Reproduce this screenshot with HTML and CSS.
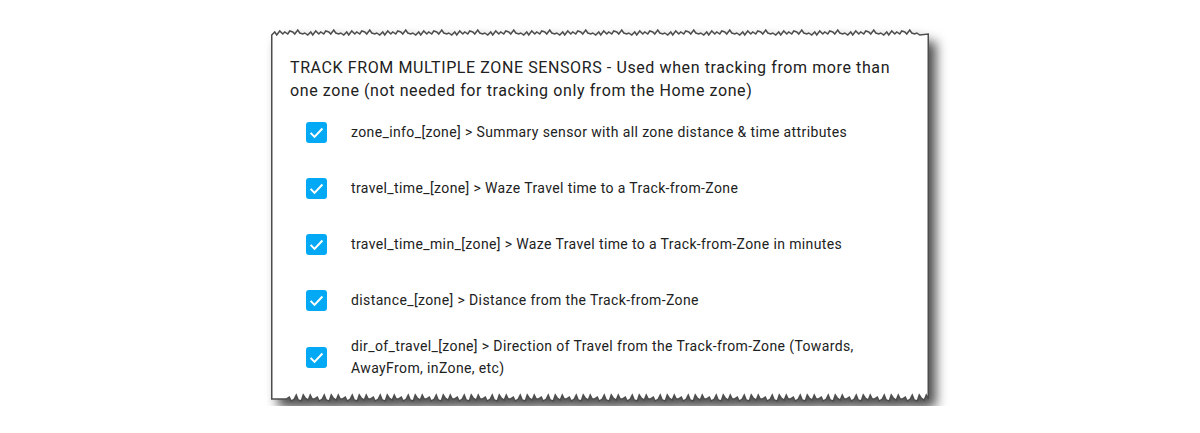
FILE: index.html
```html
<!DOCTYPE html>
<html lang="en">
<head>
<meta charset="utf-8">
<title>Track from zone sensors</title>
<link rel="stylesheet" href="styles.css">
</head>
<body>
<div class="card">
  <svg class="paper" width="658" height="378" viewBox="0 0 658 378" aria-hidden="true">
    <path d="M0.75,7 l3-3 2 3 3-4 3 3 2-2 3 2 2-3 3 1 2 2 3-4 2 3 3 1 2-1 3 2 l3-3 2 3 3-4 3 3 2-2 3 2 2-3 3 1 2 2 3-4 2 3 3 1 2-1 3 2 l3-3 2 3 3-4 3 3 2-2 3 2 2-3 3 1 2 2 3-4 2 3 3 1 2-1 3 2 l3-3 2 3 3-4 3 3 2-2 3 2 2-3 3 1 2 2 3-4 2 3 3 1 2-1 3 2 l3-3 2 3 3-4 3 3 2-2 3 2 2-3 3 1 2 2 3-4 2 3 3 1 2-1 3 2 l3-3 2 3 3-4 3 3 2-2 3 2 2-3 3 1 2 2 3-4 2 3 3 1 2-1 3 2 l3-3 2 3 3-4 3 3 2-2 3 2 2-3 3 1 2 2 3-4 2 3 3 1 2-1 3 2 l3-3 2 3 3-4 3 3 2-2 3 2 2-3 3 1 2 2 3-4 2 3 3 1 2-1 3 2 l3-3 2 3 3-4 3 3 2-2 3 2 2-3 3 1 2 2 3-4 2 3 3 1 2-1 3 2 l3-3 2 3 3-4 3 3 2-2 3 2 2-3 3 1 2 2 3-4 2 3 3 1 2-1 3 2 l3-3 2 3 3-4 3 3 2-2 3 2 2-3 3 1 2 2 3-4 2 3 3 1 2-1 3 2 l3-3 2 3 3-4 3 3 2-2 3 2 2-3 3 1 2 2 3-4 2 3 3 1 2-1 3 2 l3-3 2 3 3-4 3 3 2-2 3 2 2-3 3 1 2 2 3-4 2 3 3 1 2-1 3 2 l3-3 2 3 3-4 3 3 2-2 3 2 2-3 3 1 2 2 3-4 2 3 3 1 2-1 3 2 l3-3 2 3 3-4 3 3 2-2 3 2 2-3 3 1 2 2 3-4 2 3 3 1 2-1 3 2 l3-3 2 3 3-4 3 3 2-2 3 2 2-3 3 1 2 2 3-4 2 3 3 1 2-1 3 2 l3-3 2 3 3-4 3 3 2-2 3 2 2-3 3 1 2 2 3-4 2 3 3 1 2-1 3 2 l3-3 2 3 3-4 3 3 2-2 3 2 2-3 3 1 2 2 3-4 2 3 3 1 2-1 3 2 L657.25,6 V371 l-2-4 -2 5 -3-2 -2-3 -2 6 -3-1 -2-5 -2 4 -3 2 -2-4 -3 2 -2 0 l-2-4 -2 5 -3-2 -2-3 -2 6 -3-1 -2-5 -2 4 -3 2 -2-4 -3 2 -2 0 l-2-4 -2 5 -3-2 -2-3 -2 6 -3-1 -2-5 -2 4 -3 2 -2-4 -3 2 -2 0 l-2-4 -2 5 -3-2 -2-3 -2 6 -3-1 -2-5 -2 4 -3 2 -2-4 -3 2 -2 0 l-2-4 -2 5 -3-2 -2-3 -2 6 -3-1 -2-5 -2 4 -3 2 -2-4 -3 2 -2 0 l-2-4 -2 5 -3-2 -2-3 -2 6 -3-1 -2-5 -2 4 -3 2 -2-4 -3 2 -2 0 l-2-4 -2 5 -3-2 -2-3 -2 6 -3-1 -2-5 -2 4 -3 2 -2-4 -3 2 -2 0 l-2-4 -2 5 -3-2 -2-3 -2 6 -3-1 -2-5 -2 4 -3 2 -2-4 -3 2 -2 0 l-2-4 -2 5 -3-2 -2-3 -2 6 -3-1 -2-5 -2 4 -3 2 -2-4 -3 2 -2 0 l-2-4 -2 5 -3-2 -2-3 -2 6 -3-1 -2-5 -2 4 -3 2 -2-4 -3 2 -2 0 l-2-4 -2 5 -3-2 -2-3 -2 6 -3-1 -2-5 -2 4 -3 2 -2-4 -3 2 -2 0 l-2-4 -2 5 -3-2 -2-3 -2 6 -3-1 -2-5 -2 4 -3 2 -2-4 -3 2 -2 0 l-2-4 -2 5 -3-2 -2-3 -2 6 -3-1 -2-5 -2 4 -3 2 -2-4 -3 2 -2 0 l-2-4 -2 5 -3-2 -2-3 -2 6 -3-1 -2-5 -2 4 -3 2 -2-4 -3 2 -2 0 l-2-4 -2 5 -3-2 -2-3 -2 6 -3-1 -2-5 -2 4 -3 2 -2-4 -3 2 -2 0 l-2-4 -2 5 -3-2 -2-3 -2 6 -3-1 -2-5 -2 4 -3 2 -2-4 -3 2 -2 0 l-2-4 -2 5 -3-2 -2-3 -2 6 -3-1 -2-5 -2 4 -3 2 -2-4 -3 2 -2 0 l-2-4 -2 5 -3-2 -2-3 -2 6 -3-1 -2-5 -2 4 -3 2 -2-4 -3 2 -2 0 l-2-4 -2 5 -3-2 -2-3 -2 6 -3-1 -2-5 -2 4 -3 2 -2-4 -3 2 -2 0 l-2-4 -2 5 -3-2 -2-3 -2 6 -3-1 -2-5 -2 4 -3 2 -2-4 -3 2 -2 0 l-2-4 -2 5 -3-2 -2-3 -2 6 -3-1 -2-5 -2 4 -3 2 -2-4 -3 2 -2 0 l-2-4 -2 5 -3-2 -2-3 -2 6 -3-1 -2-5 -2 4 -3 2 -2-4 -3 2 -2 0 l-2-4 -2 5 -3-2 -2-3 -2 6 -3-1 -2-5 -2 4 -3 2 -2-4 -3 2 -2 0 L0.75,371 Z"/>
  </svg>
  <div class="content">
    <p class="heading">TRACK FROM MULTIPLE ZONE SENSORS - Used when tracking from more than one zone (not needed for tracking only from the Home zone)</p>
    <ul class="options">
      <li class="option">
        <span class="checkbox"><svg viewBox="0 0 24 24"><path d="M4.5 12.5l5 5L19.5 7"/></svg></span>
        <span class="label">zone_info_[zone] &gt; Summary sensor with all zone distance &amp; time attributes</span>
      </li>
      <li class="option">
        <span class="checkbox"><svg viewBox="0 0 24 24"><path d="M4.5 12.5l5 5L19.5 7"/></svg></span>
        <span class="label">travel_time_[zone] &gt; Waze Travel time to a Track-from-Zone</span>
      </li>
      <li class="option">
        <span class="checkbox"><svg viewBox="0 0 24 24"><path d="M4.5 12.5l5 5L19.5 7"/></svg></span>
        <span class="label">travel_time_min_[zone] &gt; Waze Travel time to a Track-from-Zone in minutes</span>
      </li>
      <li class="option">
        <span class="checkbox"><svg viewBox="0 0 24 24"><path d="M4.5 12.5l5 5L19.5 7"/></svg></span>
        <span class="label">distance_[zone] &gt; Distance from the Track-from-Zone</span>
      </li>
      <li class="option">
        <span class="checkbox"><svg viewBox="0 0 24 24"><path d="M4.5 12.5l5 5L19.5 7"/></svg></span>
        <span class="label">dir_of_travel_[zone] &gt; Direction of Travel from the Track-from-Zone (Towards, AwayFrom, inZone, etc)</span>
      </li>
    </ul>
  </div>
</div>
</body>
</html>
```
FILE: styles.css
```css
html, body {
  margin: 0;
  padding: 0;
  background: #ffffff;
}

body {
  font-family: Roboto, "Liberation Sans", sans-serif;
  color: #212121;
}

.card {
  position: relative;
  width: 658px;
  height: 378px;
  margin: 28px auto 0;
  box-sizing: border-box;
}

.paper {
  position: absolute;
  left: 0;
  top: 0;
  overflow: visible;
  filter: drop-shadow(7px 8px 6px rgba(0, 0, 0, 0.7));
}

.paper path {
  fill: #ffffff;
  stroke: #4d4d4d;
  stroke-width: 1.5;
  stroke-linejoin: miter;
}

.content {
  position: relative;
  padding: 28px 19px 0 19px;
}

.heading {
  margin: 0;
  font-size: 16px;
  line-height: 23px;
  letter-spacing: 0.6px;
}

.options {
  list-style: none;
  margin: 2px 0 0;
  padding: 0 0 0 16px;
}

.option {
  display: flex;
  align-items: center;
  min-height: 56px;
  padding: 7px 0;
  box-sizing: border-box;
}

.checkbox {
  flex: none;
  width: 21px;
  height: 21px;
  border-radius: 3px;
  background: #03a9f4;
  display: flex;
  align-items: center;
  justify-content: center;
  margin-right: 24px;
}

.checkbox svg {
  width: 19px;
  height: 19px;
}

.checkbox path {
  fill: none;
  stroke: #ffffff;
  stroke-width: 2.6;
}

.label {
  font-size: 14px;
  line-height: 22px;
  letter-spacing: 0.38px;
  max-width: 530px;
}
```
